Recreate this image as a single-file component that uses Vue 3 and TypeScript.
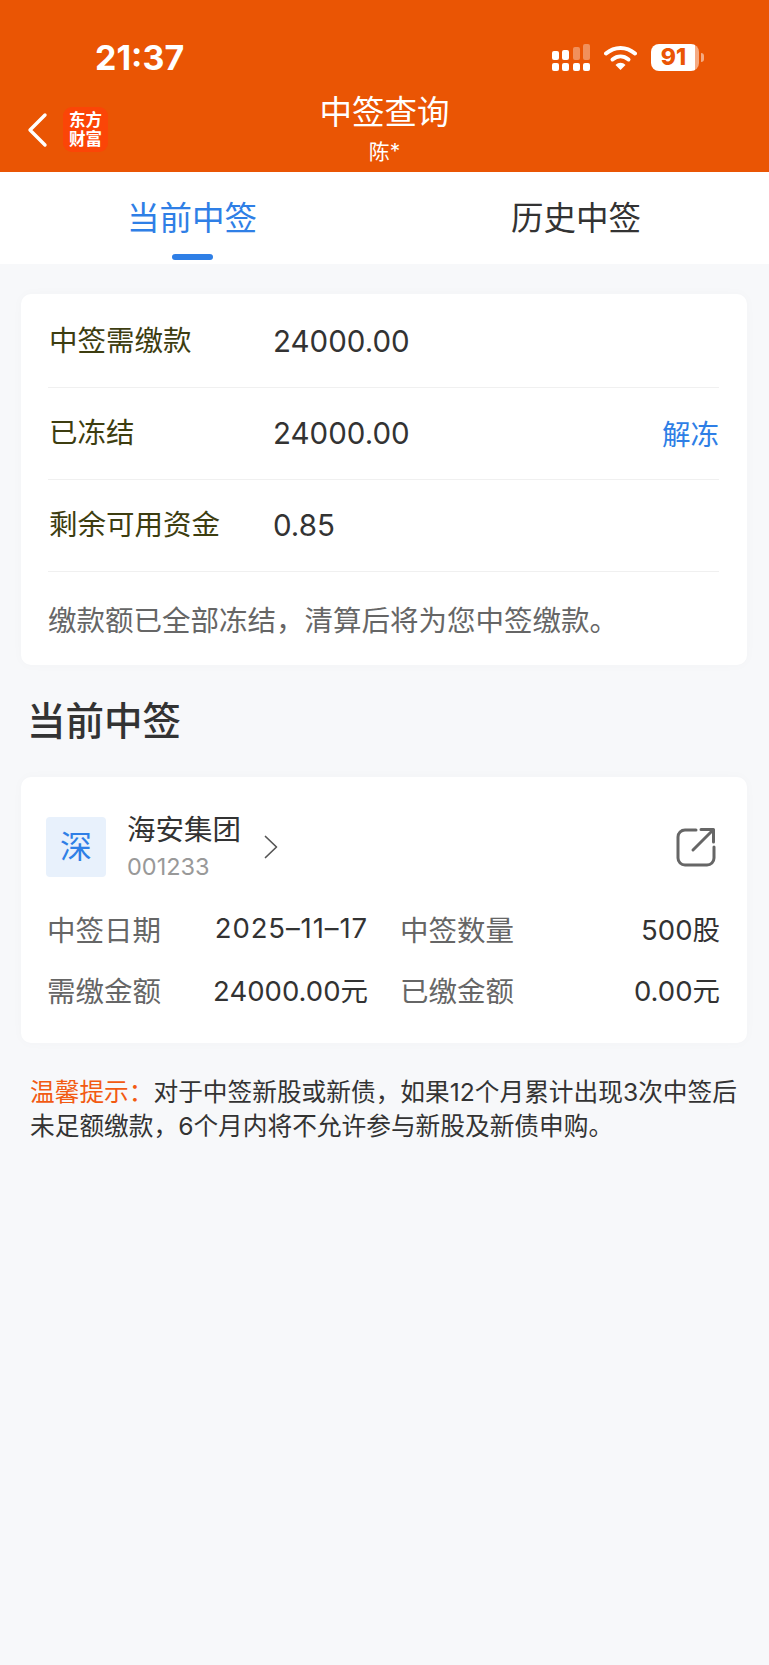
<script setup lang="ts">
const summary = [
  { label: "中签需缴款", value: "24000.00", action: "" },
  { label: "已冻结", value: "24000.00", action: "解冻" },
  { label: "剩余可用资金", value: "0.85", action: "" },
]
const details = [
  { label: "中签日期", value: "2025–11–17", date: true },
  { label: "中签数量", value: "500股", date: false },
  { label: "需缴金额", value: "24000.00元", date: false },
  { label: "已缴金额", value: "0.00元", date: false },
]
</script>

<template>
  <div class="page">
    <header class="top">
      <div class="status">
        <span class="time">21:37</span>
        <div class="status-icons">
          <svg width="38" height="27" viewBox="0 0 38 27" fill="#fff">
            <rect x="0" y="7" width="7" height="9" rx="2" />
            <rect x="10" y="6" width="7" height="10" rx="2" />
            <rect x="21" y="3" width="7" height="13" rx="2" opacity=".35" />
            <rect x="31" y="0" width="7" height="16" rx="2" opacity=".35" />
            <rect x="0" y="19" width="7" height="8" rx="2" />
            <rect x="10" y="19" width="7" height="8" rx="2" />
            <rect x="21" y="19" width="7" height="8" rx="2" />
            <rect x="31" y="19" width="7" height="8" rx="2" />
          </svg>
          <svg width="33" height="25" viewBox="0 0 33 25">
            <path d="M2 8.5C10.5 1 22.5 1 31 8.5" fill="none" stroke="#fff" stroke-width="4" stroke-linecap="round" />
            <path d="M8.500 14.500c5-4 11-4 16 0" fill="none" stroke="#fff" stroke-width="4" stroke-linecap="round" />
            <path d="M11.500 20c3-3 7-3 10 0l-5 5z" fill="#fff" />
          </svg>
          <div class="battery">
            <div class="battery-body"><span>91</span></div>
            <i class="battery-tip"></i>
          </div>
        </div>
      </div>
      <div class="nav">
        <div class="nav-left">
          <svg width="22" height="36" viewBox="0 0 22 36">
            <path d="M19 3 L4 18 L19 33" fill="none" stroke="#fff" stroke-width="3.400" stroke-linecap="round" stroke-linejoin="round" />
          </svg>
          <div class="logo">东方<br />财富</div>
        </div>
        <div class="nav-title">
          <div class="title">中签查询</div>
          <div class="sub">陈*</div>
        </div>
      </div>
    </header>

    <nav class="tabs">
      <div class="tab active">当前中签<i></i></div>
      <div class="tab">历史中签</div>
    </nav>

    <main class="content">
      <section class="card summary">
        <div v-for="row in summary" :key="row.label" class="sum-row">
          <span class="sum-label">{{ row.label }}</span>
          <span class="sum-value">{{ row.value }}</span>
          <span v-if="row.action" class="sum-action">{{ row.action }}</span>
        </div>
        <p class="sum-note">缴款额已全部冻结，清算后将为您中签缴款。</p>
      </section>

      <h2 class="heading">当前中签</h2>

      <section class="card stock">
        <div class="stock-head">
          <div class="market">深</div>
          <div class="stock-name">
            <div class="name">海安集团</div>
            <div class="code">001233</div>
          </div>
          <svg class="chev" width="16" height="26" viewBox="0 0 16 26">
            <path d="M2.500 2.500 L13.500 13 L2.500 23.500" fill="none" stroke="#555" stroke-width="1.700" stroke-linecap="round" stroke-linejoin="round" />
          </svg>
          <svg class="share" width="40" height="40" viewBox="0 0 40 40">
            <path d="M20 3H9a7 7 0 0 0-7 7v21a7 7 0 0 0 7 7h22a7 7 0 0 0 7-7v-11" fill="none" stroke="#666" stroke-width="3" stroke-linecap="round" />
            <path d="M17 23 L37 3 M25 2.500H37.500V15" fill="none" stroke="#666" stroke-width="3" stroke-linecap="round" stroke-linejoin="round" />
          </svg>
        </div>
        <div class="details">
          <div v-for="d in details" :key="d.label" class="detail">
            <span class="d-label">{{ d.label }}</span>
            <span class="d-value" :class="{ date: d.date }">{{ d.value }}</span>
          </div>
        </div>
      </section>

      <p class="tip"><span class="tip-key">温馨提示：</span>对于中签新股或新债，如果12个月累计出现3次中签后未足额缴款，6个月内将不允许参与新股及新债申购。</p>
    </main>
  </div>
</template>

<style>
html,
body {
  margin: 0;
  background: #f7f8fa;
}
</style>

<style scoped>
.page {
  min-height: 1665px;
  background: #f7f8fa;
  font-family: "Inter", "Noto Sans CJK SC", sans-serif;
  color: #333;
  text-spacing-trim: space-all;
}
.top {
  height: 172px;
  background: #ea5504;
  color: #fff;
}
.status {
  display: flex;
  justify-content: space-between;
  align-items: center;
  height: 27px;
  padding: 44px 65px 0 95px;
}
.time {
  font-size: 34px;
  font-weight: 700;
  line-height: 27px;
}
.status-icons {
  display: flex;
  align-items: center;
  gap: 14px;
}
.battery {
  display: flex;
  align-items: center;
  gap: 2px;
}
.battery-body {
  width: 48px;
  height: 27px;
  border-radius: 8px;
  background: linear-gradient(90deg, #fff 92%, rgba(255, 255, 255, 0.5) 92%);
  display: flex;
  align-items: center;
  justify-content: center;
}
.battery-body span {
  color: #ea5504;
  font-size: 23px;
  font-weight: 800;
  line-height: 1;
  margin-right: 3px;
}
.battery-tip {
  width: 3px;
  height: 9px;
  background: rgba(255, 255, 255, 0.5);
  border-radius: 0 3px 3px 0;
}
.nav {
  position: relative;
  height: 101px;
}
.nav-left {
  display: flex;
  align-items: center;
  gap: 15px;
  padding: 36px 0 0 26px;
}
.logo {
  flex: 0 0 45px;
  height: 45px;
  border-radius: 9px;
  background: #fb4507;
  font-size: 16.500px;
  font-weight: 700;
  line-height: 19px;
  text-align: center;
  padding-top: 3px;
  box-sizing: border-box;
  white-space: nowrap;
  overflow: hidden;
  font-family: "Noto Sans CJK SC", sans-serif;
}
.nav-title {
  position: absolute;
  left: 0;
  right: 0;
  top: 20px;
  text-align: center;
}
.title {
  font-size: 32.500px;
  line-height: 44px;
}
.sub {
  font-size: 21px;
  line-height: 28px;
  margin-top: 3px;
}
.tabs {
  display: flex;
  height: 92px;
  background: #fff;
}
.tab {
  position: relative;
  width: 384px;
  text-align: center;
  font-size: 32.500px;
  line-height: 94px;
  height: 92px;
}
.tab.active {
  color: #2f7fe6;
}
.tab i {
  position: absolute;
  left: 172px;
  top: 82px;
  width: 41px;
  height: 6px;
  border-radius: 3px;
  background: #2f7fe6;
}
.content {
  padding: 30px 22px 0 21px;
}
.card {
  background: #fff;
  border-radius: 10px;
  box-shadow: 0 0 12px rgba(0, 0, 0, 0.025);
}
.summary {
  padding: 2px 28px 0 27px;
}
.sum-row {
  display: flex;
  align-items: center;
  height: 92px;
  border-bottom: 1px solid #f0f0f0;
  box-sizing: border-box;
}
.sum-label {
  width: 224px;
  margin-left: 1px;
  font-size: 28.500px;
  color: #3d3d10;
  padding-bottom: 6px;
}
.sum-value {
  font-size: 29.500px;
  font-weight: 400;
  padding-bottom: 2px;
}
.sum-action {
  margin-left: auto;
  font-size: 28.500px;
  color: #2f7fe6;
  padding-bottom: 2px;
}
.sum-note {
  margin: 0;
  padding-top: 4px;
  line-height: 89px;
  font-size: 28.500px;
  color: #666;
  white-space: nowrap;
}
.heading {
  margin: 0;
  padding: 31px 6px 0;
  height: 112px;
  box-sizing: border-box;
  font-size: 38.500px;
  line-height: 50px;
  font-weight: 500;
}
.stock {
  height: 266px;
  padding: 40px 27px 0 25px;
  box-sizing: border-box;
}
.stock-head {
  display: flex;
  align-items: center;
  height: 60px;
}
.market {
  width: 60px;
  height: 60px;
  border-radius: 4px;
  background: #e8f1fc;
  color: #2f7fe6;
  font-size: 32px;
  text-align: center;
  line-height: 60px;
}
.stock-name {
  margin-left: 21px;
  width: 124px;
}
.name {
  font-size: 28.500px;
  line-height: 34px;
  white-space: nowrap;
}
.code {
  font-size: 23.500px;
  line-height: 30px;
  color: #999;
  margin-top: 5px;
}
.chev {
  margin-left: 12px;
}
.share {
  margin-left: auto;
  margin-right: 4px;
}
.details {
  display: grid;
  grid-template-columns: 321px 1fr;
  column-gap: 32px;
  row-gap: 21px;
  margin: 31px 0 0 1px;
}
.detail {
  display: flex;
  justify-content: space-between;
  align-items: center;
  height: 40px;
}
.d-label {
  font-size: 28.500px;
  color: #666;
}
.d-value {
  font-size: 27.500px;
  color: #333;
}
.d-value.date {
  letter-spacing: 0.9px;
}
.tip {
  margin: 32px 9px 0 9px;
  font-size: 24.700px;
  line-height: 34px;
  color: #333;
}
.tip-key {
  color: #f25a12;
}
</style>
